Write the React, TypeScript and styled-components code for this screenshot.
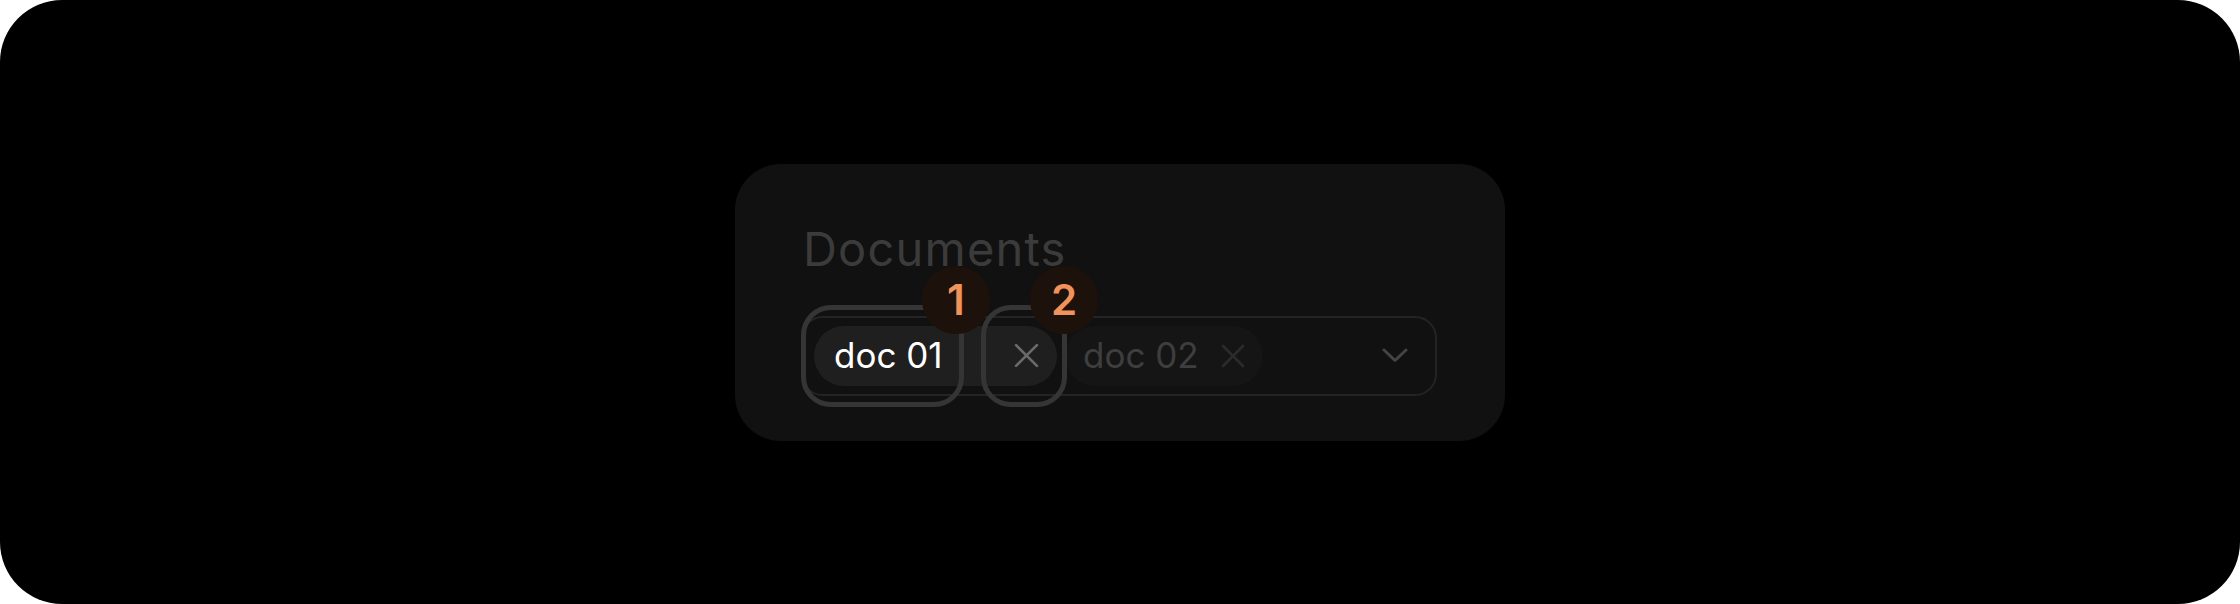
import React from "react";
import styled, { createGlobalStyle } from "styled-components";

const Global = createGlobalStyle`
  html, body { margin: 0; padding: 0; background: #ffffff; }
  #root { width: 2240px; height: 604px; }
  * { box-sizing: border-box; }
`;

const Stage = styled.div`
  width: 2240px;
  height: 604px;
  background: #000000;
  border-radius: 62px;
  display: flex;
  align-items: center;
  justify-content: center;
  font-family: Inter, "Noto Sans", sans-serif;
`;

const Card = styled.div`
  width: 770px;
  height: 277px;
  background: #111111;
  border-radius: 46px;
  padding: 61px 68px 0 66px;
  display: flex;
  flex-direction: column;
`;

const Title = styled.div`
  font-size: 47px;
  line-height: 48px;
  font-weight: 400;
  color: #3b3b3b;
  letter-spacing: 1.2px;
  margin-bottom: 43px;
  padding-left: 2px;
`;

const FieldWrap = styled.div`
  position: relative;
  width: 636px;
  height: 80px;
`;

const Field = styled.div`
  width: 100%;
  height: 100%;
  border: 2px solid #242424;
  border-radius: 22px;
  padding: 0 27px 0 11px;
  display: flex;
  align-items: center;
  gap: 8px;
`;

const Chip = styled.div<{ $active?: boolean }>`
  height: 60px;
  border-radius: 30px;
  background: ${(p) => (p.$active ? "#1f1f1f" : "#151515")};
  display: flex;
  align-items: center;
  padding: 0 18px 0 ${(p) => (p.$active ? "20px" : "18px")};
`;

const ChipLabel = styled.span<{ $active?: boolean; $w?: number }>`
  font-size: 35px;
  line-height: 1;
  color: ${(p) => (p.$active ? "#ffffff" : "#3e3e3e")};
  width: ${(p) => (p.$w ? `${p.$w}px` : "auto")};
  white-space: nowrap;
`;

const RemoveBtn = styled.span<{ $gap: number }>`
  display: flex;
  align-items: center;
  margin-left: ${(p) => p.$gap}px;
`;

const Spacer = styled.div`
  flex: 1;
`;

const Chevron = styled.span`
  display: flex;
  align-items: center;
`;

const Ring = styled.div<{ $left: number; $width: number }>`
  position: absolute;
  left: ${(p) => p.$left}px;
  top: -11px;
  width: ${(p) => p.$width}px;
  height: 102px;
  border: 5px solid #353535;
  border-radius: 30px;
  pointer-events: none;
`;

const Badge = styled.div<{ $left: number }>`
  position: absolute;
  left: ${(p) => p.$left}px;
  top: -50px;
  width: 68px;
  height: 68px;
  border-radius: 50%;
  background: #1d110b;
  color: #f0925b;
  font-size: 42px;
  font-weight: 600;
  display: flex;
  align-items: center;
  justify-content: center;
  line-height: 1;
`;

const XIcon = ({ color, size }: { color: string; size: number }) => (
  <svg width={size} height={size} viewBox="0 0 24 24" fill="none">
    <path d="M2 2 L22 22 M22 2 L2 22" stroke={color} strokeWidth="2.6" strokeLinecap="round" />
  </svg>
);

const ChevronIcon = () => (
  <svg width="26" height="15" viewBox="0 0 26 15" fill="none">
    <path d="M2 2 L13 12.5 L24 2" stroke="#444444" strokeWidth="3" strokeLinecap="round" strokeLinejoin="round" />
  </svg>
);

export default function App() {
  return (
    <>
      <Global />
      <Stage>
        <Card>
          <Title>Documents</Title>
          <FieldWrap>
            <Field>
              <Chip $active>
                <ChipLabel $active $w={128}>doc 01</ChipLabel>
                <RemoveBtn $gap={52}>
                  <XIcon color="#6a6a6a" size={25} />
                </RemoveBtn>
              </Chip>
              <Chip>
                <ChipLabel>doc 02</ChipLabel>
                <RemoveBtn $gap={22}>
                  <XIcon color="#2b2b2b" size={24} />
                </RemoveBtn>
              </Chip>
              <Spacer />
              <Chevron>
                <ChevronIcon />
              </Chevron>
            </Field>
            <Ring $left={0} $width={163} />
            <Ring $left={180} $width={86} />
            <Badge $left={121}>1</Badge>
            <Badge $left={229}>2</Badge>
          </FieldWrap>
        </Card>
      </Stage>
    </>
  );
}
